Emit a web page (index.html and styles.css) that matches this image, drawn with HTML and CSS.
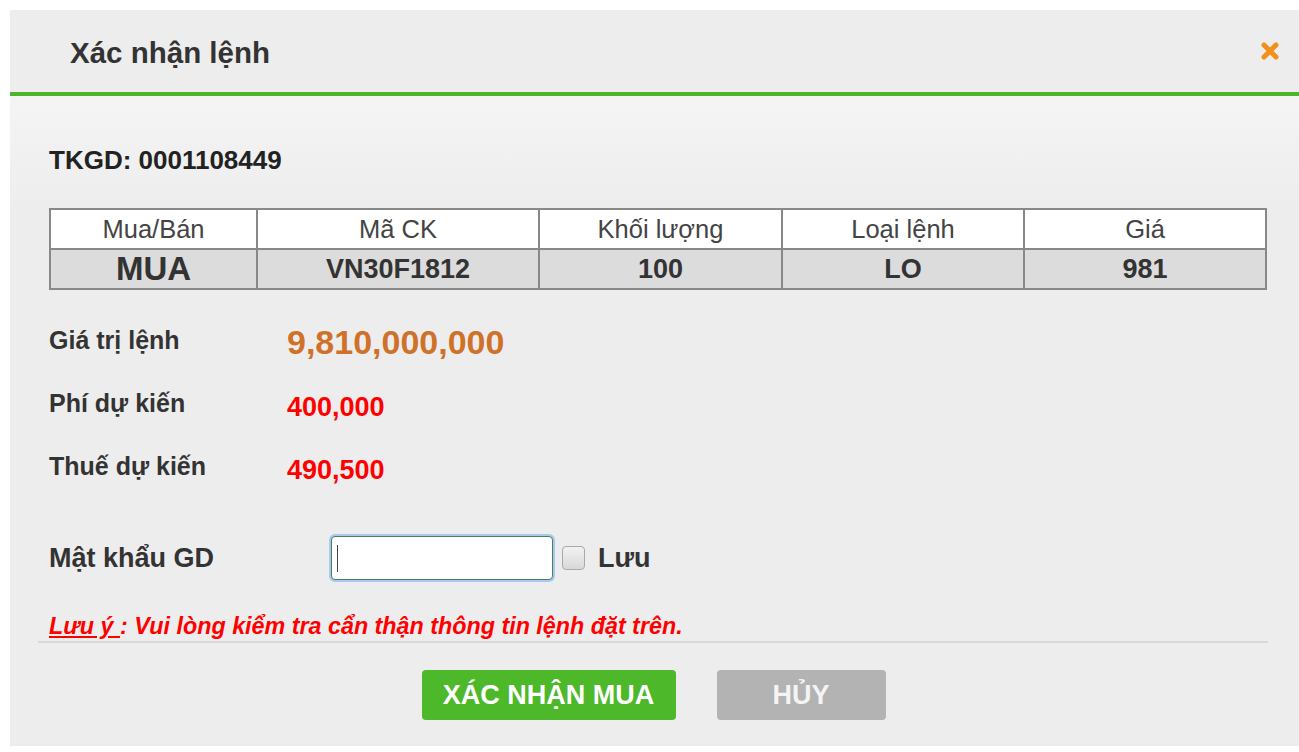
FILE: index.html
```html
<!DOCTYPE html>
<html lang="vi">
<head>
<meta charset="utf-8">
<title>Xác nhận lệnh</title>
<link rel="stylesheet" href="styles.css">
</head>
<body>
<div class="dialog">
  <div class="dlg-head">
    <div class="dlg-title">Xác nhận lệnh</div>
    <svg class="close" width="20" height="20" viewBox="0 0 20 20" aria-label="Đóng">
      <path d="M4 4 L16 16 M16 4 L4 16" stroke="#f39019" stroke-width="5" stroke-linecap="round"/>
    </svg>
  </div>
  <div class="dlg-body">
    <div class="acct">TKGD: 0001108449</div>
    <table class="order">
      <colgroup>
        <col class="c1"><col class="c2"><col class="c3"><col class="c4"><col class="c5">
      </colgroup>
      <tr class="th-row">
        <td>Mua/Bán</td><td>Mã CK</td><td>Khối lượng</td><td>Loại lệnh</td><td>Giá</td>
      </tr>
      <tr class="td-row">
        <td class="side">MUA</td><td>VN30F1812</td><td>100</td><td>LO</td><td>981</td>
      </tr>
    </table>
    <div class="info">
      <div class="lbl">Giá trị lệnh</div><div class="val total">9,810,000,000</div>
      <div class="lbl">Phí dự kiến</div><div class="val red">400,000</div>
      <div class="lbl">Thuế dự kiến</div><div class="val red">490,500</div>
    </div>
    <div class="pw-row">
      <div class="pw-lbl">Mật khẩu GD</div>
      <div class="pw-input"><span class="caret"></span></div>
      <span class="chk"></span>
      <span class="chk-lbl">Lưu</span>
    </div>
    <div class="note"><span class="u">Lưu ý </span>: Vui lòng kiểm tra cẩn thận thông tin lệnh đặt trên.</div>
    <div class="sep"></div>
    <div class="actions">
      <div class="btn btn-ok">XÁC NHẬN MUA</div>
      <div class="btn btn-cancel">HỦY</div>
    </div>
  </div>
</div>
</body>
</html>
```

FILE: styles.css
```css
html, body {
  margin: 0;
  padding: 0;
  overflow: hidden;
  background: #ffffff;
}
body {
  padding: 10px 0 0 10px;
  font-family: "Liberation Sans", Arial, sans-serif;
  color: #333333;
}
.dialog {
  width: 1295px;
  background: #ededed;
}
.dlg-head {
  display: flex;
  align-items: center;
  justify-content: space-between;
  padding: 0 23px 0 60px;
  background: #ededed;
  border-bottom: 4px solid #4db52b;
  box-sizing: border-box;
  height: 86px;
}
.dlg-title {
  font-size: 29.5px;
  font-weight: bold;
  color: #333333;
  padding-top: 4px;
}
.close {
  display: block;
  margin-right: 2px;
}
.dlg-body {
  background: linear-gradient(#f4f4f4 0, #ededed 120px, #ededed 100%);
  padding: 49px 0 26px 39px;
}
.acct {
  font-size: 26px;
  font-weight: bold;
  line-height: 30px;
  color: #222222;
}
.order {
  margin-top: 33px;
  width: 1216px;
  border-collapse: collapse;
  border: 2px solid #888888;
  table-layout: fixed;
}
.order td {
  border: 2px solid #888888;
  text-align: center;
  height: 38px;
  line-height: 30px;
  padding: 0;
  color: #333333;
}
.c1 { width: 207px; }
.c2 { width: 282px; }
.c3 { width: 243px; }
.c4 { width: 242px; }
.c5 { width: 242px; }
.th-row td {
  background: #ffffff;
  font-size: 25.5px;
  color: #444444;
}
.order .td-row td {
  background: #dcdcdc;
  font-size: 27px;
  font-weight: bold;
  color: #333333;
  height: 37px;
  padding-bottom: 1px;
}
.order .td-row td.side {
  font-size: 33px;
}
.info {
  margin-top: 19px;
  display: grid;
  grid-template-columns: 238px auto;
  grid-auto-rows: 63px;
  align-items: center;
}
.lbl {
  font-size: 25px;
  font-weight: bold;
  color: #333333;
}
.val {
  font-weight: bold;
  padding-top: 5px;
}
.total {
  font-size: 34px;
  color: #d0712a;
  padding-top: 3px;
}
.red {
  font-size: 27px;
  color: #ff0000;
  padding-top: 7px;
}
.pw-row {
  margin-top: 38px;
  display: flex;
  align-items: center;
  height: 44px;
}
.pw-lbl {
  width: 282px;
  font-size: 27px;
  font-weight: bold;
  color: #333333;
}
.pw-input {
  width: 222px;
  height: 44px;
  box-sizing: border-box;
  background: #ffffff;
  border: 1px solid #4f7f52;
  border-radius: 4px;
  box-shadow: 0 0 0 2px #a9c8f4;
  display: flex;
  align-items: center;
  padding-left: 5px;
}
.caret {
  width: 1px;
  height: 27px;
  background: #444444;
}
.chk {
  width: 23px;
  height: 24px;
  box-sizing: border-box;
  margin-left: 9px;
  border: 1px solid #a9a9a9;
  border-radius: 4px;
  background: linear-gradient(#f2f2f2, #d8d8d8);
}
.chk-lbl {
  margin-left: 13px;
  font-size: 27px;
  font-weight: bold;
  color: #333333;
}
.note {
  margin-top: 34px;
  font-size: 23.3px;
  line-height: 24px;
  font-weight: bold;
  font-style: italic;
  color: #ff0000;
}
.note .u {
  text-decoration: underline;
}
.sep {
  margin: 3px 0 0 -11px;
  width: 1230px;
  height: 2px;
  background: #d9d9d9;
}
.actions {
  margin: 27px 0 0 -39px;
  display: flex;
  justify-content: center;
  gap: 41px;
  padding-right: 8px;
}
.btn {
  height: 50px;
  box-sizing: border-box;
  border-radius: 4px;
  display: flex;
  align-items: center;
  justify-content: center;
  font-size: 27px;
  font-weight: bold;
  color: #ffffff;
}
.btn-ok {
  width: 254px;
  background: #4cb82a;
}
.btn-cancel {
  width: 169px;
  background: #b3b3b3;
  color: #f4f4f4;
}
```
